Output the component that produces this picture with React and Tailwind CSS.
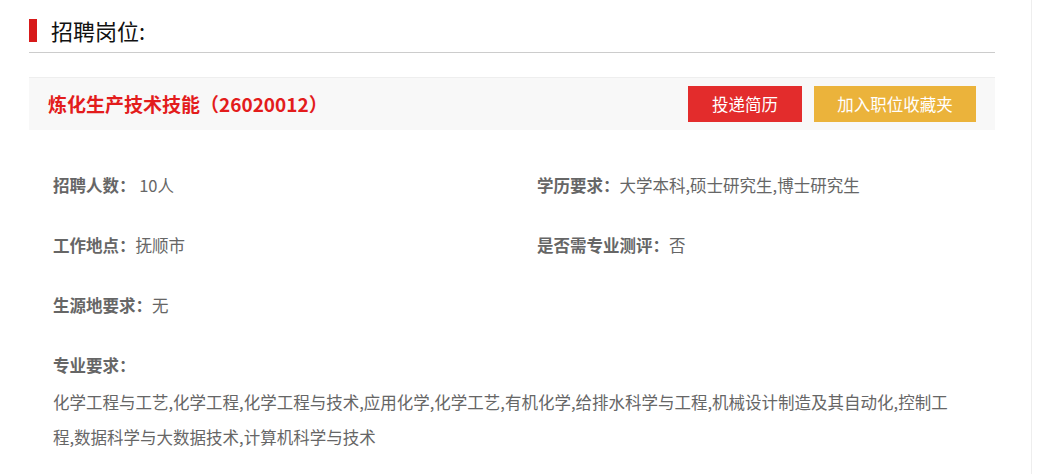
export default function App() {
    const rows = [
        [
            { label: '招聘人数：', value: ' 10人' },
            { label: '学历要求：', value: '大学本科,硕士研究生,博士研究生' },
        ],
        [
            { label: '工作地点：', value: '抚顺市' },
            { label: '是否需专业测评：', value: '否' },
        ],
        [{ label: '生源地要求：', value: '无' }],
    ]

    return (
        <div
            className="flex h-[474px] w-[1062px] overflow-hidden bg-white"
            style={{ fontFamily: '"Noto Sans CJK SC", "Microsoft YaHei", sans-serif' }}
        >
            <div className="w-[1032px] shrink-0 border-r border-[#eeeeee] pl-[29px]">
                {/* Section header */}
                <div className="flex w-[966px] items-center border-b border-[#cccccc] pt-[17px] pb-[8px]">
                    <div className="h-[23px] w-[8px] bg-[#d71a1a]"></div>
                    <h2 className="ml-[14px] text-[22px] leading-[27px] text-[#111]">招聘岗位:</h2>
                </div>

                {/* Job title bar */}
                <div className="mt-[24px] flex h-[53px] w-[966px] items-center justify-between border-t border-[#eeeeee] bg-[#f8f8f8] pl-[19px] pr-[19px]">
                    <h3 className="text-[19px] font-bold text-[#e31c1c]">炼化生产技术技能（26020012）</h3>
                    <div className="flex gap-[12px]">
                        <button className="h-[36px] w-[114px] bg-[#e32c2c] text-[16.5px] text-white">投递简历</button>
                        <button className="h-[36px] w-[162px] bg-[#ebb33b] text-[16.5px] text-white">加入职位收藏夹</button>
                    </div>
                </div>

                {/* Details */}
                <div className="mt-[25px] pl-[24px] text-[16.5px] text-[#666]">
                    {rows.map((row, i) => (
                        <div key={i} className="flex h-[60px] items-center">
                            {row.map((item, j) => (
                                <div key={j} className={j === 0 ? 'w-[484px] whitespace-pre' : 'whitespace-pre'}>
                                    <span className="font-bold">{item.label}</span>
                                    {item.value}
                                </div>
                            ))}
                        </div>
                    ))}

                    <div className="mt-[12px] font-bold leading-[36px]">专业要求：</div>
                    <p className="mt-[2px] w-[905px] leading-[35px]">
                        化学工程与工艺,化学工程,化学工程与技术,应用化学,化学工艺,有机化学,给排水科学与工程,机械设计制造及其自动化,控制工程,数据科学与大数据技术,计算机科学与技术
                    </p>
                </div>
            </div>
        </div>
    )
}
